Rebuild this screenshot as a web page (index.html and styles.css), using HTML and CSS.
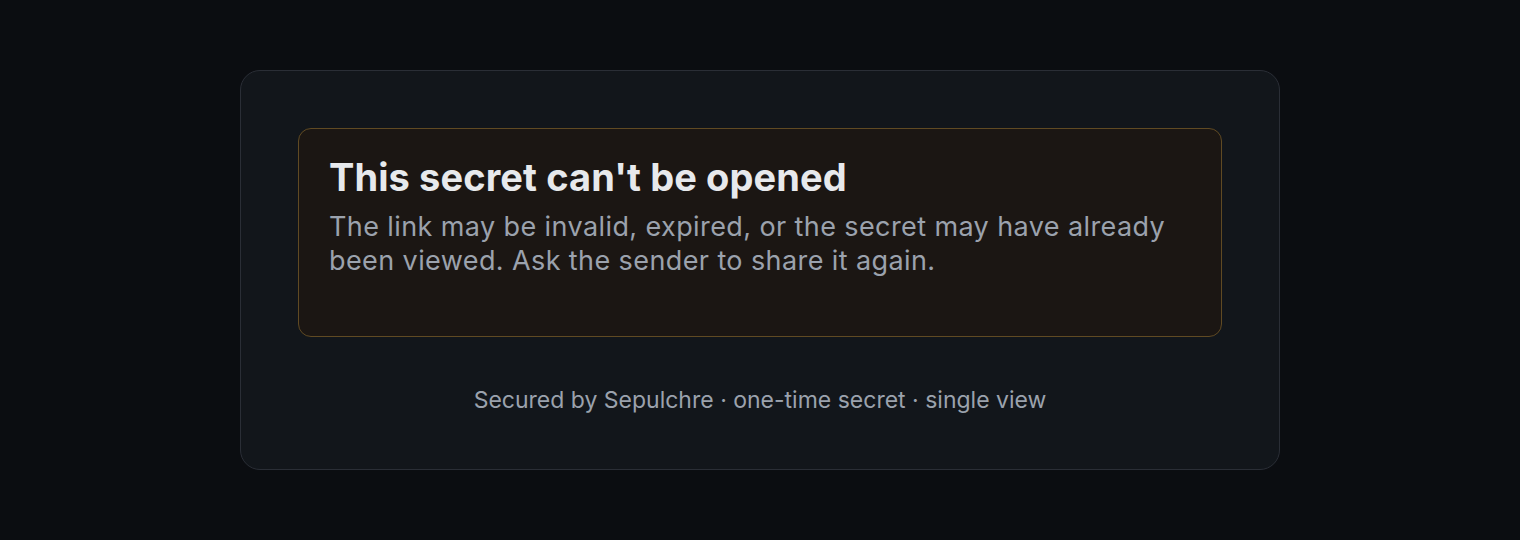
FILE: index.html
```html
<!DOCTYPE html>
<html lang="en">
<head>
    <meta charset="UTF-8">
    <meta name="viewport" content="width=device-width, initial-scale=1.0">
    <title>Sepulchre - Secret unavailable</title>
    <link rel="stylesheet" href="styles.css">
</head>
<body>
    <div class="card">
        <div class="alert">
            <h1 class="alert-title">This secret can't be opened</h1>
            <p class="alert-text">The link may be invalid, expired, or the secret may have already been viewed. Ask the sender to share it again.</p>
        </div>
        <p class="footer">Secured by Sepulchre · one-time secret · single view</p>
    </div>
</body>
</html>
```

FILE: styles.css
```css
:root {
    --bg-color: #0b0d11;
    --card-bg: #12161b;
    --card-border: #2a2e36;
    --alert-bg: #1b1613;
    --alert-border: #604a23;
    --title-color: #e7e9ec;
    --text-muted: #9ba2ad;
    --font-main: 'Inter', 'Noto Sans', sans-serif;
}

* {
    margin: 0;
    padding: 0;
    box-sizing: border-box;
}

body {
    background-color: var(--bg-color);
    font-family: var(--font-main);
    height: 100vh;
    display: flex;
    justify-content: center;
    align-items: center;
    overflow: hidden;
}

.card {
    width: 1040px;
    padding: 57px 57px 53px;
    background-color: var(--card-bg);
    border: 1px solid var(--card-border);
    border-radius: 20px;
    display: flex;
    flex-direction: column;
}

.alert {
    background-color: var(--alert-bg);
    border: 1px solid var(--alert-border);
    border-radius: 13px;
    padding: 26px 30px 58px;
}

.alert-title {
    font-size: 38px;
    font-weight: 700;
    line-height: 1.2;
    color: var(--title-color);
    letter-spacing: 0.1px;
}

.alert-text {
    margin-top: 10px;
    font-size: 27px;
    line-height: 34px;
    letter-spacing: 0.4px;
    color: var(--text-muted);
}

.footer {
    margin-top: 47px;
    text-align: center;
    font-size: 23px;
    line-height: 1.4;
    color: var(--text-muted);
}
```
